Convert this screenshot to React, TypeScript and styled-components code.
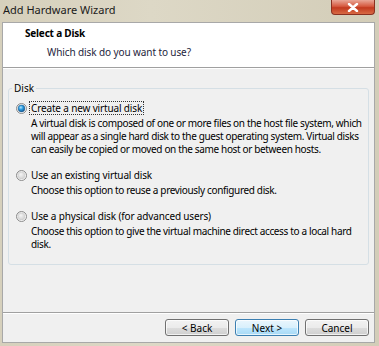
import React from 'react';
import styled, { createGlobalStyle } from 'styled-components';

const GlobalStyle = createGlobalStyle`
  html, body {
    margin: 0;
    padding: 0;
    background: #d8d2bf;
  }
  body {
    font-family: "Noto Sans", "DejaVu Sans", sans-serif;
  }
`;

const font = `"Noto Sans", "DejaVu Sans", sans-serif`;

const options = [
  {
    label: 'Create a new virtual disk',
    text: 'A virtual disk is composed of one or more files on the host file system, which will appear as a single hard disk to the guest operating system. Virtual disks can easily be copied or moved on the same host or between hosts.',
    checked: true,
  },
  {
    label: 'Use an existing virtual disk',
    text: 'Choose this option to reuse a previously configured disk.',
    checked: false,
  },
  {
    label: 'Use a physical disk (for advanced users)',
    text: 'Choose this option to give the virtual machine direct access to a local hard disk.',
    checked: false,
  },
];

function Radio({ checked }: { checked: boolean }) {
  return (
    <RadioSvg width="11" height="11" viewBox="0 0 11 11">
      <defs>
        <linearGradient id="rOuter" x1="0" y1="0" x2="1" y2="1">
          <stop offset="0" stopColor="#e2e2e2" />
          <stop offset="1" stopColor="#ffffff" />
        </linearGradient>
        <radialGradient id="rDot" cx="0.4" cy="0.35" r="0.7">
          <stop offset="0" stopColor="#b4e6fc" />
          <stop offset="0.45" stopColor="#2a9be0" />
          <stop offset="1" stopColor="#0f4f8a" />
        </radialGradient>
        <radialGradient id="rOff" cx="0.4" cy="0.35" r="0.7">
          <stop offset="0" stopColor="#f4f4f4" />
          <stop offset="1" stopColor="#cfcfcf" />
        </radialGradient>
      </defs>
      <circle cx="5.5" cy="5.5" r="5" fill="url(#rOuter)" stroke="#8a8a8a" strokeWidth="1" />
      <circle
        cx="5.5"
        cy="5.5"
        r="3.4"
        fill={checked ? 'url(#rDot)' : 'url(#rOff)'}
        stroke={checked ? '#1d5a8e' : '#c8c8c8'}
        strokeWidth="0.5"
      />
    </RadioSvg>
  );
}

function App() {
  return (
    <>
      <GlobalStyle />
      <Window>
        <TitleBar>
          <Title>Add Hardware Wizard</Title>
          <CloseButton>
            <svg width="12" height="9" viewBox="0 0 12 9">
              <path d="M2 1 L10 8 M10 1 L2 8" stroke="#ffffff" strokeWidth="2.4" strokeLinecap="round" />
            </svg>
          </CloseButton>
        </TitleBar>
        <Client>
          <Header>
            <HeaderTitle>Select a Disk</HeaderTitle>
            <HeaderSub>Which disk do you want to use?</HeaderSub>
          </Header>
          <Body>
            <GroupBox>
              <Legend>Disk</Legend>
              {options.map((o) => (
                <Option key={o.label}>
                  <OptionRow>
                    <Radio checked={o.checked} />
                    <OptionLabel focused={o.checked}>{o.label}</OptionLabel>
                  </OptionRow>
                  <OptionText>{o.text}</OptionText>
                </Option>
              ))}
            </GroupBox>
          </Body>
          <Footer>
            <Button>&lt; Back</Button>
            <Button primary>Next &gt;</Button>
            <Button>Cancel</Button>
          </Footer>
        </Client>
      </Window>
    </>
  );
}

const Window = styled.div`
  width: 379px;
  height: 346px;
  box-sizing: border-box;
  display: flex;
  flex-direction: column;
  padding: 0 4px 3px 2px;
  background: linear-gradient(90deg, #d6d0bc 0%, #ddd8c6 40%, #d3cdb8 100%);
`;

const TitleBar = styled.div`
  height: 22px;
  display: flex;
  align-items: flex-start;
  justify-content: space-between;
  flex-shrink: 0;
`;

const Title = styled.div`
  font-family: ${font};
  font-size: 11px;
  line-height: 16px;
  color: #1a1a1a;
  padding: 2px 0 0 1px;
`;

const CloseButton = styled.div`
  width: 44px;
  height: 15px;
  border: 1px solid #8a3020;
  border-top: none;
  border-radius: 0 0 4px 4px;
  box-sizing: border-box;
  background: linear-gradient(180deg, #e9a797 0%, #d65a40 45%, #c23a1f 55%, #d86a44 100%);
  display: flex;
  align-items: center;
  justify-content: center;
`;

const Client = styled.div`
  flex: 1;
  display: flex;
  flex-direction: column;
  background: #f0f0f0;
  border: 1px solid #a8a8a8;
`;

const Header = styled.div`
  height: 45px;
  flex-shrink: 0;
  box-sizing: border-box;
  background: #ffffff;
  border-bottom: 1px solid #a0a0a0;
  padding: 4px 0 0 22px;
  font-family: ${font};
`;

const HeaderTitle = styled.div`
  font-size: 10px;
  font-weight: bold;
  letter-spacing: -0.2px;
  color: #000;
  line-height: 12px;
`;

const HeaderSub = styled.div`
  font-size: 10px;
  letter-spacing: -0.1px;
  color: #1e1e3c;
  line-height: 12px;
  padding: 7px 0 0 22px;
`;

const Body = styled.div`
  flex: 1;
  padding: 19px 5px 0 5px;
  border-top: 1px solid #ffffff;
`;

const GroupBox = styled.div`
  position: relative;
  border: 1px solid #d5dfe5;
  border-radius: 3px;
  padding: 13px 4px 0 7px;
  height: 177px;
  box-sizing: border-box;
  display: flex;
  flex-direction: column;
  gap: 13px;
`;

const Legend = styled.div`
  position: absolute;
  top: -7px;
  left: 3px;
  padding: 0 2px;
  background: #f0f0f0;
  font-family: ${font};
  font-size: 10px;
  color: #000;
  line-height: 12px;
`;

const Option = styled.div``;

const OptionRow = styled.div`
  display: flex;
  align-items: center;
  height: 12px;
`;

const RadioSvg = styled.svg`
  flex-shrink: 0;
  margin-right: 2px;
`;

const OptionLabel = styled.span<{ focused?: boolean }>`
  font-family: ${font};
  font-size: 10px;
  letter-spacing: -0.15px;
  color: #000;
  line-height: 12px;
  padding: 0 1px;
  border: 1px dotted ${(p) => (p.focused ? '#333' : 'transparent')};
`;

const OptionText = styled.div`
  font-family: ${font};
  font-size: 10px;
  letter-spacing: -0.35px;
  color: #000;
  line-height: 13px;
  padding: 3px 0 0 15px;
`;

const Footer = styled.div`
  height: 29px;
  flex-shrink: 0;
  border-top: 1px solid #a0a0a0;
  box-shadow: inset 0 1px 0 #ffffff;
  display: flex;
  align-items: center;
  justify-content: flex-end;
  gap: 6px;
  padding: 0 5px 0 0;
`;

const Button = styled.div<{ primary?: boolean }>`
  width: 64px;
  height: 17px;
  box-sizing: border-box;
  border: 1px solid ${(p) => (p.primary ? '#3c7fb1' : '#707070')};
  border-radius: 3px;
  background: ${(p) =>
    p.primary
      ? 'linear-gradient(180deg, #eaf6fd 0%, #d9f0fc 50%, #bee6fd 51%, #a7d9f5 100%)'
      : 'linear-gradient(180deg, #f2f2f2 0%, #ebebeb 50%, #dddddd 51%, #cfcfcf 100%)'};
  box-shadow: inset 0 0 0 1px rgba(255, 255, 255, 0.7);
  font-family: ${font};
  font-size: 10px;
  color: #000;
  display: flex;
  align-items: center;
  justify-content: center;
`;

export default App;
